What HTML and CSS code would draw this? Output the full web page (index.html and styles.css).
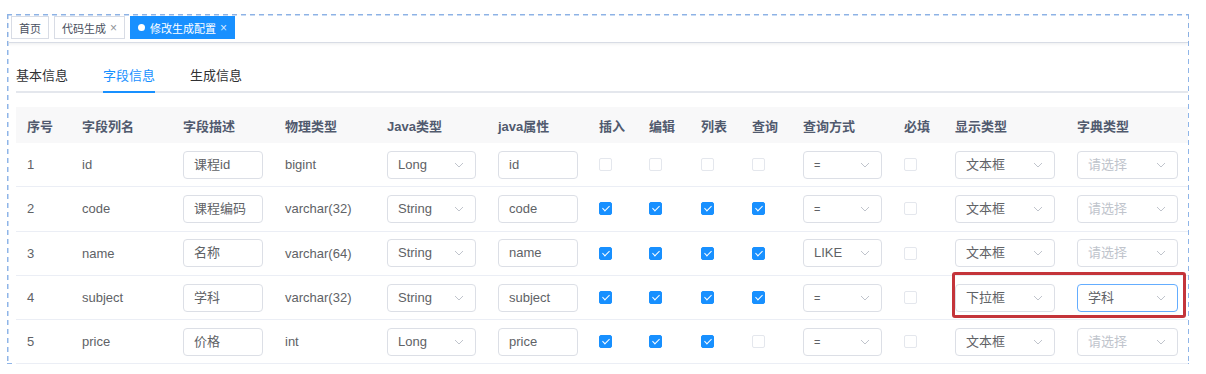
FILE: index.html
```html
<!DOCTYPE html>
<html lang="zh">
<head>
    <meta charset="utf-8">
    <title>修改生成配置</title>
    <link rel="stylesheet" href="styles.css">
</head>
<body>
<div class="frame">
    <div class="tags">
        <span class="tag">首页</span>
        <span class="tag">代码生成 <span class="close">×</span></span>
        <span class="tag active"><span class="dot"></span>修改生成配置 <span class="close">×</span></span>
    </div>

    <div class="content">
        <div class="tabs">
            <span class="tab">基本信息</span>
            <span class="tab active">字段信息</span>
            <span class="tab">生成信息</span>
        </div>

        <table class="grid">
            <colgroup>
                <col style="width:55px"><col style="width:101px"><col style="width:102px"><col style="width:102px">
                <col style="width:111px"><col style="width:101px"><col style="width:50px"><col style="width:52px">
                <col style="width:51px"><col style="width:51px"><col style="width:101px"><col style="width:51px">
                <col style="width:122px"><col style="width:122px">
            </colgroup>
            <thead>
                <tr>
                    <th>序号</th><th>字段列名</th><th>字段描述</th><th>物理类型</th><th>Java类型</th><th>java属性</th>
                    <th>插入</th><th>编辑</th><th>列表</th><th>查询</th><th>查询方式</th><th>必填</th><th>显示类型</th><th>字典类型</th>
                </tr>
            </thead>
            <tbody>
                <tr>
                    <td>1</td><td>id</td>
                    <td><div class="inp w80">课程id</div></td>
                    <td>bigint</td>
                    <td><div class="sel w89"><span>Long</span><svg class="arrow" viewBox="0 0 10 6"><path d="M1 1l4 4 4-4"/></svg></div></td>
                    <td><div class="inp w80">id</div></td>
                    <td><span class="cb"></span></td><td><span class="cb"></span></td><td><span class="cb"></span></td><td><span class="cb"></span></td>
                    <td><div class="sel w79"><span class="eq">=</span><svg class="arrow" viewBox="0 0 10 6"><path d="M1 1l4 4 4-4"/></svg></div></td>
                    <td><span class="cb"></span></td>
                    <td><div class="sel w100"><span>文本框</span><svg class="arrow" viewBox="0 0 10 6"><path d="M1 1l4 4 4-4"/></svg></div></td>
                    <td><div class="sel w101"><span class="ph">请选择</span><svg class="arrow" viewBox="0 0 10 6"><path d="M1 1l4 4 4-4"/></svg></div></td>
                </tr>
                <tr>
                    <td>2</td><td>code</td>
                    <td><div class="inp w80">课程编码</div></td>
                    <td>varchar(32)</td>
                    <td><div class="sel w89"><span>String</span><svg class="arrow" viewBox="0 0 10 6"><path d="M1 1l4 4 4-4"/></svg></div></td>
                    <td><div class="inp w80">code</div></td>
                    <td><span class="cb on"></span></td><td><span class="cb on"></span></td><td><span class="cb on"></span></td><td><span class="cb on"></span></td>
                    <td><div class="sel w79"><span class="eq">=</span><svg class="arrow" viewBox="0 0 10 6"><path d="M1 1l4 4 4-4"/></svg></div></td>
                    <td><span class="cb"></span></td>
                    <td><div class="sel w100"><span>文本框</span><svg class="arrow" viewBox="0 0 10 6"><path d="M1 1l4 4 4-4"/></svg></div></td>
                    <td><div class="sel w101"><span class="ph">请选择</span><svg class="arrow" viewBox="0 0 10 6"><path d="M1 1l4 4 4-4"/></svg></div></td>
                </tr>
                <tr>
                    <td>3</td><td>name</td>
                    <td><div class="inp w80">名称</div></td>
                    <td>varchar(64)</td>
                    <td><div class="sel w89"><span>String</span><svg class="arrow" viewBox="0 0 10 6"><path d="M1 1l4 4 4-4"/></svg></div></td>
                    <td><div class="inp w80">name</div></td>
                    <td><span class="cb on"></span></td><td><span class="cb on"></span></td><td><span class="cb on"></span></td><td><span class="cb on"></span></td>
                    <td><div class="sel w79"><span>LIKE</span><svg class="arrow" viewBox="0 0 10 6"><path d="M1 1l4 4 4-4"/></svg></div></td>
                    <td><span class="cb"></span></td>
                    <td><div class="sel w100"><span>文本框</span><svg class="arrow" viewBox="0 0 10 6"><path d="M1 1l4 4 4-4"/></svg></div></td>
                    <td><div class="sel w101"><span class="ph">请选择</span><svg class="arrow" viewBox="0 0 10 6"><path d="M1 1l4 4 4-4"/></svg></div></td>
                </tr>
                <tr>
                    <td>4</td><td>subject</td>
                    <td><div class="inp w80">学科</div></td>
                    <td>varchar(32)</td>
                    <td><div class="sel w89"><span>String</span><svg class="arrow" viewBox="0 0 10 6"><path d="M1 1l4 4 4-4"/></svg></div></td>
                    <td><div class="inp w80">subject</div></td>
                    <td><span class="cb on"></span></td><td><span class="cb on"></span></td><td><span class="cb on"></span></td><td><span class="cb on"></span></td>
                    <td><div class="sel w79"><span class="eq">=</span><svg class="arrow" viewBox="0 0 10 6"><path d="M1 1l4 4 4-4"/></svg></div></td>
                    <td><span class="cb"></span></td>
                    <td><div class="sel w100"><span>下拉框</span><svg class="arrow" viewBox="0 0 10 6"><path d="M1 1l4 4 4-4"/></svg></div></td>
                    <td><div class="sel w101 focus"><span>学科</span><svg class="arrow" viewBox="0 0 10 6"><path d="M1 1l4 4 4-4"/></svg></div></td>
                </tr>
                <tr>
                    <td>5</td><td>price</td>
                    <td><div class="inp w80">价格</div></td>
                    <td>int</td>
                    <td><div class="sel w89"><span>Long</span><svg class="arrow" viewBox="0 0 10 6"><path d="M1 1l4 4 4-4"/></svg></div></td>
                    <td><div class="inp w80">price</div></td>
                    <td><span class="cb on"></span></td><td><span class="cb on"></span></td><td><span class="cb on"></span></td><td><span class="cb"></span></td>
                    <td><div class="sel w79"><span class="eq">=</span><svg class="arrow" viewBox="0 0 10 6"><path d="M1 1l4 4 4-4"/></svg></div></td>
                    <td><span class="cb"></span></td>
                    <td><div class="sel w100"><span>文本框</span><svg class="arrow" viewBox="0 0 10 6"><path d="M1 1l4 4 4-4"/></svg></div></td>
                    <td><div class="sel w101"><span class="ph">请选择</span><svg class="arrow" viewBox="0 0 10 6"><path d="M1 1l4 4 4-4"/></svg></div></td>
                </tr>
            </tbody>
        </table>
    </div>

    <div class="mark"></div>
</div>
</body>
</html>
```

FILE: styles.css
```css
body {
    margin: 0;
    background-color: #fff;
    font-family: "Liberation Sans", "Noto Sans CJK SC", sans-serif;
    font-size: 13px;
    color: #606266;
}

/* dashed outline drawn with gradients for longer dashes */
.frame {
    position: relative;
    box-sizing: border-box;
    width: 1182px;
    height: 350px;
    margin: 14px 0 0 7px;
    padding: 1px;
    overflow: hidden;
    background:
        repeating-linear-gradient(90deg, #8fb5e8 0 5px, transparent 5px 9px) top left / 100% 1.5px no-repeat,
        repeating-linear-gradient(90deg, #8fb5e8 0 5px, transparent 5px 9px) bottom left / 100% 1.5px no-repeat,
        repeating-linear-gradient(180deg, #8fb5e8 0 5px, transparent 5px 9px) top left / 1.5px 100% no-repeat,
        repeating-linear-gradient(180deg, #8fb5e8 0 5px, transparent 5px 9px) top right / 1.5px 100% no-repeat;
}

/* tags view */
.tags {
    display: flex;
    align-items: flex-start;
    gap: 5px;
    box-sizing: border-box;
    height: 28px;
    padding: 1px 0 0 3px;
    border-bottom: 1px solid #d8dce5;
    box-shadow: 0 1px 3px rgba(0, 21, 41, 0.08);
}

.tag {
    display: flex;
    align-items: center;
    gap: 4px;
    box-sizing: border-box;
    height: 23px;
    padding: 0 7px;
    border: 1px solid #d8dce5;
    font-size: 11px;
    color: #495060;
}

.tag.active {
    background-color: #1890ff;
    border-color: #1890ff;
    color: #fff;
}

.dot {
    width: 7px;
    height: 7px;
    margin-right: 1px;
    border-radius: 50%;
    background-color: #fff;
}

.close {
    font-size: 12px;
    color: #909399;
}

.tag.active .close {
    color: #d6e9ff;
}

/* tabs */
.content {
    padding: 15px 0 0 8px;
}

.tabs {
    display: flex;
    align-items: flex-start;
    gap: 35px;
    box-sizing: border-box;
    height: 35px;
    margin-bottom: 14px;
    border-bottom: 2px solid #e4e7ed;
}

.tab {
    height: 35px;
    line-height: 35px;
    color: #303133;
}

.tab.active {
    color: #1890ff;
    box-shadow: inset 0 -2px 0 #1890ff;
}

/* table */
.grid {
    width: 1172px;
    table-layout: fixed;
    border-collapse: collapse;
}

.grid th {
    height: 36px;
    padding: 0 0 0 11px;
    background-color: #f8f8f9;
    color: #515a6e;
    font-weight: bold;
    text-align: left;
}

.grid td {
    height: 43.3px;
    padding: 0 0 0 11px;
    border-bottom: 1px solid #ebeef5;
    white-space: nowrap;
}

.inp, .sel {
    box-sizing: border-box;
    height: 28px;
    border: 1px solid #dcdfe6;
    border-radius: 4px;
    background-color: #fff;
    line-height: 26px;
    color: #606266;
}

.inp {
    padding: 0 10px;
    overflow: hidden;
}

.sel {
    display: flex;
    align-items: center;
    justify-content: space-between;
    padding: 0 11px 0 10px;
}

.sel.focus {
    border-color: #64adff;
}

.ph {
    color: #c0c4cc;
}

.eq {
    font-size: 11px;
}

.arrow {
    width: 10px;
    height: 6px;
    fill: none;
    stroke: #c0c4cc;
    stroke-width: 1;
}

.w79 { width: 79px; }
.w80 { width: 80px; }
.w89 { width: 89px; }
.w100 { width: 100px; }
.w101 { width: 101px; }

.cb {
    position: relative;
    display: block;
    box-sizing: border-box;
    width: 13px;
    height: 13px;
    border: 1px solid #e4e7ed;
    border-radius: 2px;
    background-color: #fff;
}

.cb.on {
    background-color: #1890ff;
    border-color: #1890ff;
}

.cb.on::after {
    content: "";
    position: absolute;
    left: 3.5px;
    top: 1px;
    width: 3px;
    height: 6px;
    border: 1px solid #fff;
    border-top: 0;
    border-left: 0;
    transform: rotate(45deg);
}

/* red annotation box */
.mark {
    position: absolute;
    left: 945px;
    top: 258px;
    box-sizing: border-box;
    width: 234px;
    height: 46px;
    border: 3px solid #c4343a;
    border-radius: 3px;
}
```
